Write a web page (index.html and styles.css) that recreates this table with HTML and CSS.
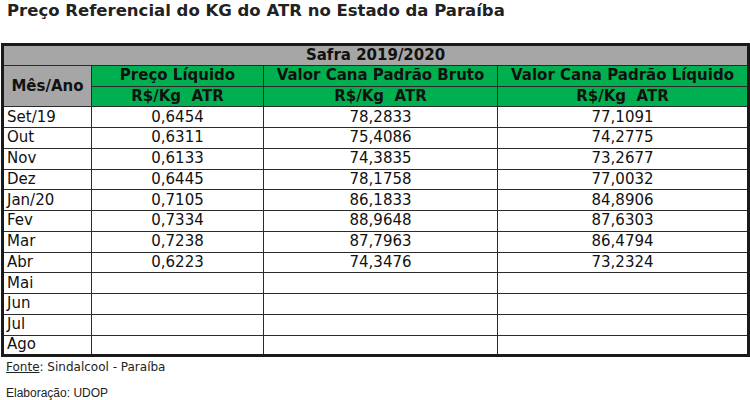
FILE: index.html
```html
<!DOCTYPE html>
<html lang="pt">
<head>
<meta charset="utf-8">
<link rel="stylesheet" href="styles.css">
</head>
<body>
<h1 class="title">Preço Referencial do KG do ATR no Estado da Paraíba</h1>
<table class="atr">
  <colgroup>
    <col class="c1"><col class="c2"><col class="c3"><col class="c4">
  </colgroup>
  <thead>
    <tr class="safra"><th colspan="4">Safra 2019/2020</th></tr>
    <tr class="hdr">
      <th rowspan="2" class="mes">Mês/Ano</th>
      <th>Preço Líquido</th>
      <th>Valor Cana Padrão Bruto</th>
      <th>Valor Cana Padrão Líquido</th>
    </tr>
    <tr class="hdr">
      <th>R$/Kg&nbsp; ATR</th>
      <th>R$/Kg&nbsp; ATR</th>
      <th>R$/Kg&nbsp; ATR</th>
    </tr>
  </thead>
  <tbody>
    <tr><td>Set/19</td><td>0,6454</td><td>78,2833</td><td>77,1091</td></tr>
    <tr><td>Out</td><td>0,6311</td><td>75,4086</td><td>74,2775</td></tr>
    <tr><td>Nov</td><td>0,6133</td><td>74,3835</td><td>73,2677</td></tr>
    <tr><td>Dez</td><td>0,6445</td><td>78,1758</td><td>77,0032</td></tr>
    <tr><td>Jan/20</td><td>0,7105</td><td>86,1833</td><td>84,8906</td></tr>
    <tr><td>Fev</td><td>0,7334</td><td>88,9648</td><td>87,6303</td></tr>
    <tr><td>Mar</td><td>0,7238</td><td>87,7963</td><td>86,4794</td></tr>
    <tr><td>Abr</td><td>0,6223</td><td>74,3476</td><td>73,2324</td></tr>
    <tr><td>Mai</td><td></td><td></td><td></td></tr>
    <tr><td>Jun</td><td></td><td></td><td></td></tr>
    <tr><td>Jul</td><td></td><td></td><td></td></tr>
    <tr><td>Ago</td><td></td><td></td><td></td></tr>
  </tbody>
</table>
<p class="fonte"><span class="u">Fonte</span>: Sindalcool - Paraíba</p>
<p class="elab">Elaboração: UDOP</p>
</body>
</html>
```
FILE: styles.css
```css
html, body {
  margin: 0;
  padding: 0;
  background: #fff;
  color: #111;
}
body {
  font-family: "DejaVu Sans", Verdana, sans-serif;
}
.title {
  margin: 0;
  padding: 1px 0 0 7px;
  height: 43px;
  box-sizing: border-box;
  font-size: 16.5px;
  font-weight: bold;
  line-height: 20px;
  color: #222;
}
.atr {
  border-collapse: collapse;
  margin-left: 1px;
  width: 748px;
  table-layout: fixed;
  border: 3px solid #1a1a1a;
  font-size: 15px;
}
.c1 { width: 89px; }
.c2 { width: 172px; }
.c3 { width: 234px; }
.c4 { width: 251px; }
.atr th, .atr td {
  border: 1px solid #2a2a2a;
  padding: 0 2px;
  line-height: 17px;
  white-space: nowrap;
  overflow: hidden;
}
.atr tr { height: 20.75px; }
.atr th {
  font-weight: bold;
  text-align: center;
  color: #111;
}
.safra th {
  background: #a6a6a6;
}
.hdr th {
  background: #00b050;
}
.hdr th.mes {
  background: #a6a6a6;
}
.atr td {
  text-align: center;
  background: #fff;
}
.atr td:first-child {
  text-align: left;
  padding-left: 3px;
}
.fonte {
  margin: 0;
  padding: 2px 0 0 6px;
  font-size: 12px;
  line-height: 16px;
  color: #222;
}
.u { text-decoration: underline; }
.elab {
  margin: 0;
  padding: 10px 0 0 6px;
  font-family: "Liberation Sans", Arial, sans-serif;
  font-size: 12px;
  line-height: 16px;
  color: #222;
}
```
